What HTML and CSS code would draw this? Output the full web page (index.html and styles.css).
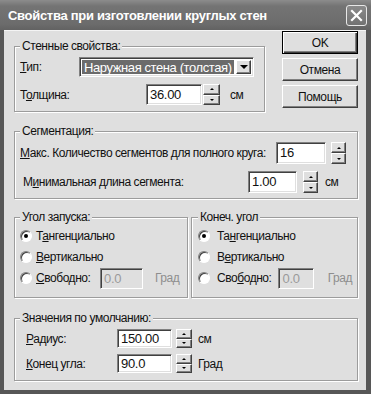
FILE: index.html
```html
<!DOCTYPE html>
<html lang="ru">
<head>
    <meta charset="UTF-8">
    <title>Свойства при изготовлении круглых стен</title>
    <link rel="stylesheet" href="styles.css">
</head>
<body>
    <div class="window">
        <div class="titlebar">
            <span class="title">Свойства при изготовлении круглых стен</span>
            <button class="close" aria-label="Закрыть">
                <svg width="13" height="13" viewBox="0 0 13 13">
                    <path d="M2 2 L11 11 M11 2 L2 11" stroke="#fff" stroke-width="2.2" stroke-linecap="square"/>
                </svg>
            </button>
        </div>

        <div class="frame">
            <div class="top">
                <div class="group group-wall">
                    <span class="group-title">Стенные свойства:</span>
                    <div class="row row-type">
                        <label class="lbl lbl-type"><u>Т</u>ип:</label>
                        <div class="combo">
                            <span class="combo-value">Наружная стена (толстая)</span>
                            <span class="combo-btn"><span class="arrow-down"></span></span>
                        </div>
                    </div>
                    <div class="row row-thick">
                        <label class="lbl lbl-thick">Т<u>о</u>лщина:</label>
                        <div class="field f-thick">36.00</div>
                        <div class="spin s-thick"><span class="spin-up"><i></i></span><span class="spin-down"><i></i></span></div>
                        <span class="unit u-thick">см</span>
                    </div>
                </div>

                <div class="buttons">
                    <button class="btn btn-default">OK</button>
                    <button class="btn">Отмена</button>
                    <button class="btn">Помощь</button>
                </div>
            </div>

            <div class="group group-seg">
                <span class="group-title">Сегментация:</span>
                <div class="row row-max">
                    <label class="lbl lbl-max"><u>М</u>акс. Количество сегментов для полного круга:</label>
                    <div class="field f-max">16</div>
                    <div class="spin s-max"><span class="spin-up"><i></i></span><span class="spin-down"><i></i></span></div>
                </div>
                <div class="row row-min">
                    <label class="lbl lbl-min">М<u>и</u>нимальная длина сегмента:</label>
                    <div class="field f-min">1.00</div>
                    <div class="spin s-min"><span class="spin-up"><i></i></span><span class="spin-down"><i></i></span></div>
                    <span class="unit u-min">см</span>
                </div>
            </div>

            <div class="angles">
                <div class="group group-start">
                    <span class="group-title">Угол запуска:</span>
                    <div class="row radio-row">
                        <span class="radio checked"></span>
                        <label>Т<u>а</u>нгенциально</label>
                    </div>
                    <div class="row radio-row">
                        <span class="radio"></span>
                        <label><u>В</u>ертикально</label>
                    </div>
                    <div class="row radio-row radio-last">
                        <span class="radio"></span>
                        <label class="lbl-free"><u>С</u>вободно:</label>
                        <div class="field disabled f-free">0.0</div>
                        <span class="unit muted">Град</span>
                    </div>
                </div>

                <div class="group group-end">
                    <span class="group-title">Конеч. угол</span>
                    <div class="row radio-row">
                        <span class="radio checked"></span>
                        <label>Та<u>н</u>генциально</label>
                    </div>
                    <div class="row radio-row">
                        <span class="radio"></span>
                        <label>В<u>е</u>ртикально</label>
                    </div>
                    <div class="row radio-row radio-last">
                        <span class="radio"></span>
                        <label class="lbl-free">Сво<u>б</u>одно:</label>
                        <div class="field disabled f-free">0.0</div>
                        <span class="unit muted">Град</span>
                    </div>
                </div>
            </div>

            <div class="group group-def">
                <span class="group-title">Значения по умолчанию:</span>
                <div class="row row-def">
                    <label class="lbl lbl-def"><u>Р</u>адиус:</label>
                    <div class="field f-def">150.00</div>
                    <div class="spin s-def"><span class="spin-up"><i></i></span><span class="spin-down"><i></i></span></div>
                    <span class="unit u-def">см</span>
                </div>
                <div class="row row-def row-def2">
                    <label class="lbl lbl-def"><u>К</u>онец угла:</label>
                    <div class="field f-def">90.0</div>
                    <div class="spin s-def"><span class="spin-up"><i></i></span><span class="spin-down"><i></i></span></div>
                    <span class="unit u-def">Град</span>
                </div>
            </div>
        </div>
    </div>
</body>
</html>
```

FILE: styles.css
```css
* {
    margin: 0;
    padding: 0;
    box-sizing: border-box;
}

:root {
    --face: #dfdfdf;
    --shadow: #808080;
    --dark: #404040;
    --light: #ffffff;
    --frame: #575757;
}

body {
    background: var(--face);
    font-family: 'Liberation Sans', Arial, sans-serif;
    font-size: 12px;
    letter-spacing: -0.45px;
    color: #111;
    white-space: nowrap;
}

.window {
    width: 371px;
    height: 394px;
    display: flex;
    flex-direction: column;
}

/* title bar */
.titlebar {
    height: 30px;
    flex-shrink: 0;
    display: flex;
    align-items: center;
    justify-content: space-between;
    padding: 0 4px 0 8px;
    background: linear-gradient(#8c8c8c, #747474 20%, #6c6c6c 80%, #626262);
}

.title {
    color: #fff;
    font-weight: bold;
    font-size: 13px;
    letter-spacing: -0.3px;
}

.close {
    width: 21px;
    height: 21px;
    margin-top: 1px;
    border: 1px solid #e8e8e8;
    border-radius: 3px;
    background: linear-gradient(#8a8a8a, #727272);
    display: flex;
    align-items: center;
    justify-content: center;
}

/* dialog body */
.frame {
    flex: 1;
    background: var(--face);
    border-left: 4px solid var(--frame);
    border-right: 5px solid var(--frame);
    border-bottom: 4px solid var(--frame);
    box-shadow: inset 0 1px 0 #f4f4f4;
    padding-left: 10px;
}

.top {
    display: flex;
    align-items: flex-start;
}

.group {
    display: flex;
    flex-direction: column;
    border: 1px solid #9c9c9c;
    box-shadow: 1px 1px 0 var(--light), inset 1px 1px 0 var(--light);
    padding: 0 5px;
}

.group-title {
    align-self: flex-start;
    margin: -8px 0 0 0;
    padding: 0 2px;
    line-height: 15px;
    background: var(--face);
}

.row {
    display: flex;
    align-items: center;
}

.lbl {
    flex-shrink: 0;
}

/* sunken edit field */
.field {
    background: #fff;
    border: 1px solid;
    border-color: var(--shadow) var(--light) var(--light) var(--shadow);
    box-shadow: inset 1px 1px 0 var(--dark), inset -1px -1px 0 var(--face);
    padding: 2px 0 0 3px;
    line-height: 15px;
    font-size: 13px;
    letter-spacing: -0.3px;
}

.field.disabled {
    background: var(--face);
    color: #9a9a9a;
}

.unit.muted {
    color: #8e8e8e;
}

/* spinner */
.spin {
    display: flex;
    flex-direction: column;
    flex-shrink: 0;
}

.spin span {
    flex: 1;
    display: flex;
    align-items: center;
    justify-content: center;
    background: var(--face);
    border: 1px solid;
    border-color: var(--light) var(--dark) var(--dark) var(--light);
    box-shadow: inset -1px -1px 0 var(--shadow);
}

.spin i {
    width: 0;
    height: 0;
    border-left: 2px solid transparent;
    border-right: 2px solid transparent;
}

.spin-up i {
    border-bottom: 2px solid #000;
}

.spin-down i {
    border-top: 2px solid #000;
}

/* wall group */
.group-wall {
    width: 251px;
    margin-top: 16px;
    padding-bottom: 6px;
}

.row-type {
    margin-top: 3px;
}

.lbl-type {
    width: 59px;
}

.combo {
    width: 175px;
    height: 20px;
    display: flex;
    align-items: stretch;
    gap: 2px;
    padding: 2px;
    background: #fff;
    border: 1px solid;
    border-color: var(--shadow) var(--light) var(--light) var(--shadow);
    box-shadow: inset 1px 1px 0 var(--dark), inset -1px -1px 0 var(--face);
}

.combo-value {
    flex: 1;
    overflow: hidden;
    background: #6b6b6b;
    color: #fff;
    font-size: 13px;
    letter-spacing: -0.4px;
    line-height: 16px;
    padding-left: 2px;
}

.combo-btn {
    width: 15px;
    display: flex;
    align-items: center;
    justify-content: center;
    background: var(--face);
    border: 1px solid;
    border-color: var(--light) var(--dark) var(--dark) var(--light);
    box-shadow: inset -1px -1px 0 var(--shadow);
}

.arrow-down {
    width: 0;
    height: 0;
    border-left: 4px solid transparent;
    border-right: 4px solid transparent;
    border-top: 4px solid #000;
}

.row-thick {
    margin-top: 7px;
}

.lbl-thick {
    width: 126px;
}

.f-thick {
    width: 56px;
    height: 21px;
}

.s-thick {
    width: 17px;
    height: 21px;
    margin-left: 1px;
}

.u-thick {
    margin-left: 10px;
}

/* buttons */
.buttons {
    display: flex;
    flex-direction: column;
    gap: 4px;
    margin: 1px 0 0 17px;
}

.btn {
    width: 76px;
    height: 23px;
    font-family: 'Liberation Sans', Arial, sans-serif;
    font-size: 12px;
    letter-spacing: -0.4px;
    color: #111;
    background: var(--face);
    border: 1px solid;
    border-color: var(--light) var(--dark) var(--dark) var(--light);
    box-shadow: inset -1px -1px 0 var(--shadow);
}

.btn-default {
    border-color: #000;
    box-shadow: inset 1px 1px 0 var(--light), inset -1px -1px 0 var(--dark), inset -2px -2px 0 var(--shadow);
}

/* segmentation group */
.group-seg {
    width: 344px;
    margin-top: 19px;
    padding-bottom: 5px;
}

.row-max {
    margin-top: 3px;
}

.lbl-max {
    width: 256px;
}

.f-max {
    width: 50px;
    height: 22px;
}

.s-max {
    width: 15px;
    height: 22px;
    margin-left: 5px;
}

.row-min {
    margin-top: 7px;
    padding-left: 3px;
}

.lbl-min {
    width: 225px;
}

.f-min {
    width: 49px;
    height: 22px;
}

.s-min {
    width: 15px;
    height: 22px;
    margin-left: 6px;
}

.u-min {
    margin-left: 7px;
}

/* angle groups */
.angles {
    display: flex;
    gap: 3px;
    margin-top: 18px;
}

.group-start {
    width: 174px;
    padding-bottom: 8px;
}

.group-end {
    width: 167px;
    padding: 0 5px 8px 6px;
}

.radio-row {
    height: 21px;
    gap: 4px;
}

.group-end .radio-row {
    gap: 7px;
}

.radio-last {
    height: 22px;
}

.radio {
    width: 12px;
    height: 12px;
    flex-shrink: 0;
    border-radius: 50%;
    background: #fff;
    border: 1px solid;
    border-color: var(--shadow) var(--light) var(--light) var(--shadow);
    box-shadow: inset 1px 1px 0 var(--dark);
    display: flex;
    align-items: center;
    justify-content: center;
}

.radio.checked::after {
    content: '';
    width: 4px;
    height: 4px;
    border-radius: 50%;
    background: #000;
}

.group-start .lbl-free {
    width: 60px;
}

.group-end .lbl-free {
    width: 55px;
}

.f-free {
    width: 43px;
    height: 21px;
}

.radio-last .unit {
    margin-left: 8px;
}

.group-end .f-free {
    width: 44px;
}

.group-end .radio-last .unit {
    margin-left: 7px;
}

/* defaults group */
.group-def {
    width: 344px;
    margin-top: 20px;
    padding-bottom: 7px;
}

.row-def {
    margin-top: 3px;
    padding-left: 6px;
}

.row-def2 {
    margin-top: 6px;
}

.lbl-def {
    width: 91px;
}

.f-def {
    width: 55px;
    height: 19px;
    padding-top: 1px;
}

.s-def {
    width: 16px;
    height: 19px;
    margin-left: 4px;
}

.u-def {
    margin-left: 6px;
}
```
